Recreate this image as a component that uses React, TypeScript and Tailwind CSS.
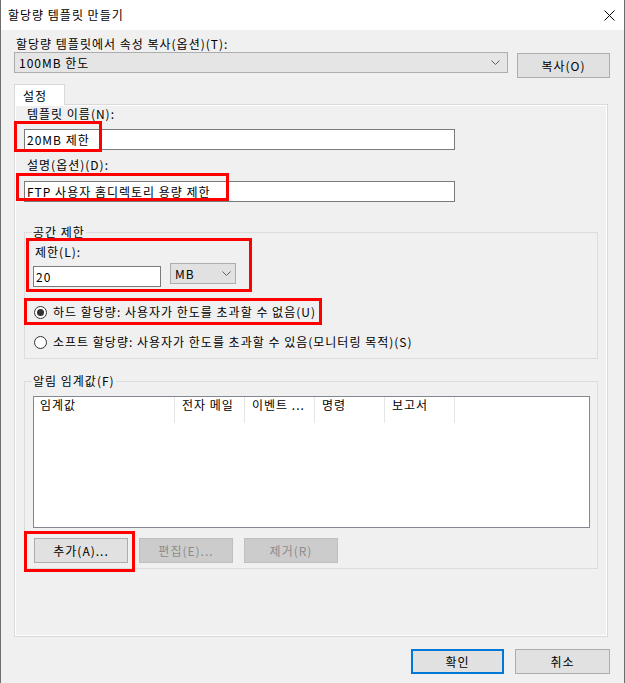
import React from 'react';

const Chevron = () => (
  <svg width="9" height="5" viewBox="0 0 9 5">
    <path d="M0.5 0.5 L4.5 4.5 L8.5 0.5" fill="none" stroke="#606060" strokeWidth="1" />
  </svg>
);

const Radio = ({ checked, label }: { checked?: boolean; label: string }) => (
  <div className="flex items-center h-[16px] pl-[9px]">
    <span className="w-[13px] h-[13px] rounded-full border border-[#333333] bg-white flex items-center justify-center">
      {checked && <span className="w-[7px] h-[7px] rounded-full bg-[#333333]" />}
    </span>
    <span className="ml-[6px]">{label}</span>
  </div>
);

const RedBox = ({ className }: { className: string }) => (
  <div className={'absolute border-[3px] border-[#ff0000] pointer-events-none ' + className} />
);

const columns = ['전자 메일', '이벤트 ...', '명령', '보고서'];

export default function App() {
  return (
    <div className="relative w-[625px] h-[683px] overflow-hidden bg-[#f0f0f0] border-x border-[#6e6e6e] text-[12px] leading-[16px] tracking-[1px] text-black font-['Noto_Sans_CJK_KR','Liberation_Sans',sans-serif]">
      {/* title bar */}
      <div className="h-[30px] bg-white flex items-center justify-between pl-[7px] pr-[9px]">
        <span>할당량 템플릿 만들기</span>
        <svg width="11" height="11" viewBox="0 0 11 11">
          <path d="M0.5 0.5 L10.5 10.5 M10.5 0.5 L0.5 10.5" stroke="#000" strokeWidth="1" />
        </svg>
      </div>

      <div className="pl-[13px] pr-[14px]">
        <div className="mt-[6px] pl-[2px]">할당량 템플릿에서 속성 복사(옵션)(T):</div>
        <div className="flex items-start justify-between">
          <div className="w-[494px] h-[21px] bg-[#e5e5e5] border border-[#adadad] flex items-center justify-between pl-[4px] pr-[7px]">
            <span>100MB 한도</span>
            <Chevron />
          </div>
          <button className="mt-[1px] w-[93px] h-[25px] bg-[#e1e1e1] border border-[#adadad]">복사(O)</button>
        </div>

        {/* tab */}
        <div className="mt-[6px] relative z-10 -mb-px w-[51px] h-[21px] bg-white border-x border-t border-[#d9d9d9] pl-[8px] pt-[3px]">
          설정
        </div>
        <div className="w-[594px] h-[533px] border border-[#d9d9d9] bg-white p-px">
          <div className="h-full bg-[#f0f0f0] pr-[9px]">
            <div className="pl-[11px]">템플릿 이름(N):</div>
            <div className="mt-[7px] ml-[8px] w-[431px] h-[21px] bg-white border border-[#7a7a7a] pl-[2px] flex items-center">
              20MB 제한
            </div>
            <div className="mt-[7px] pl-[11px]">설명(옵션)(D):</div>
            <div className="mt-[8px] ml-[8px] w-[431px] h-[21px] bg-white border border-[#7a7a7a] pl-[2px] flex items-center">
              FTP 사용자 홈디렉토리 용량 제한
            </div>

            <fieldset className="mt-[22px] ml-[8px] w-[574px] border border-[#dcdcdc] pb-[8px]">
              <legend className="ml-[7px] px-[1px]">공간 제한</legend>
              <div className="mt-[4px] pl-[10px]">제한(L):</div>
              <div className="mt-[3px] flex items-start pl-[8px]">
                <div className="mt-[3px] w-[128px] h-[21px] bg-white border border-[#7a7a7a] pl-[2px] flex items-center">20</div>
                <div className="ml-[9px] w-[66px] h-[21px] bg-[#e1e1e1] border border-[#adadad] flex items-center justify-between pl-[4px] pr-[4px]">
                  <span>MB</span>
                  <Chevron />
                </div>
              </div>
              <div className="mt-[17px]">
                <Radio checked label="하드 할당량: 사용자가 한도를 초과할 수 없음(U)" />
              </div>
              <div className="mt-[14px]">
                <Radio label="소프트 할당량: 사용자가 한도를 초과할 수 있음(모니터링 목적)(S)" />
              </div>
            </fieldset>

            <fieldset className="mt-[14px] ml-[8px] w-[574px] border border-[#dcdcdc] pb-[5px]">
              <legend className="ml-[7px] px-[1px]">알림 임계값(F)</legend>
              <div className="mt-[7px] ml-[8px] w-[557px] h-[132px] bg-white border border-[#828790]">
                <div className="flex h-[26px]">
                  <div className="w-[141px] border-r border-[#e5e5e5] pl-[6px]">임계값</div>
                  {columns.map((c) => (
                    <div key={c} className="w-[70px] border-r border-[#e5e5e5] pl-[7px] whitespace-nowrap overflow-hidden">
                      {c}
                    </div>
                  ))}
                </div>
              </div>
              <div className="mt-[10px] ml-[9px] flex gap-[11px]">
                <button className="w-[94px] h-[25px] bg-[#e1e1e1] border border-[#adadad]">추가(A)...</button>
                <button className="w-[94px] h-[25px] bg-[#cccccc] border border-[#bfbfbf] text-[#8c8c8c]">편집(E)...</button>
                <button className="w-[94px] h-[25px] bg-[#cccccc] border border-[#bfbfbf] text-[#8c8c8c]">제거(R)</button>
              </div>
            </fieldset>
          </div>
        </div>

        <div className="mt-[12px] flex justify-end gap-[11px]">
          <button className="w-[93px] h-[25px] bg-[#e1e1e1] border-2 border-[#0078d7]">확인</button>
          <button className="w-[95px] h-[25px] bg-[#e1e1e1] border border-[#adadad]">취소</button>
        </div>
      </div>

      {/* annotation boxes */}
      <RedBox className="left-[13px] top-[121px] w-[88px] h-[31px]" />
      <RedBox className="left-[15px] top-[173px] w-[213px] h-[28px]" />
      <RedBox className="left-[25px] top-[238px] w-[226px] h-[54px]" />
      <RedBox className="left-[23px] top-[298px] w-[298px] h-[27px]" />
      <RedBox className="left-[23px] top-[531px] w-[111px] h-[41px]" />
    </div>
  );
}
